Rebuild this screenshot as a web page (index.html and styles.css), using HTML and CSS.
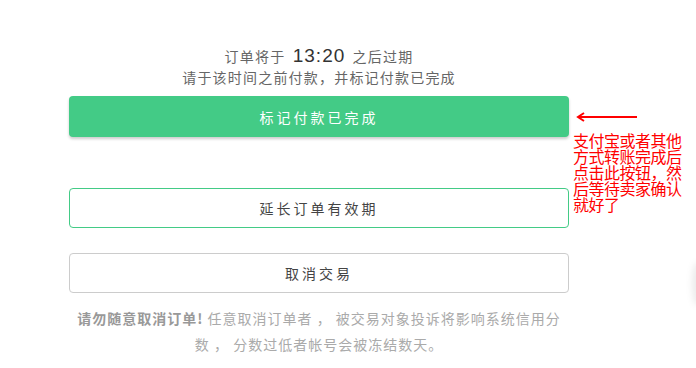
FILE: index.html
```html
<!DOCTYPE html>
<html lang="zh-CN">
<head>
  <meta charset="UTF-8">
  <title>订单付款</title>
  <link rel="stylesheet" href="styles.css">
</head>
<body>
  <div class="wrap">
    <div class="pay">
      <div class="notice">
        <p>订单将于 <span class="time">13:20</span> 之后过期</p>
        <p>请于该时间之前付款，并标记付款已完成</p>
      </div>

      <button class="btn btn-done">标记付款已完成</button>
      <button class="btn btn-extend">延长订单有效期</button>
      <button class="btn btn-cancel">取消交易</button>

      <p class="warn"><strong>请勿随意取消订单!</strong> 任意取消订单者 ， 被交易对象投诉将影响系统信用分数 ， 分数过低者帐号会被冻结数天。</p>
    </div>

    <div class="note">
      <svg class="arrow" width="64" height="10" viewBox="0 0 64 10">
        <line x1="4" y1="5" x2="62" y2="5" stroke="#f00" stroke-width="2"/>
        <polyline points="9,1 3,5 9,9" fill="none" stroke="#f00" stroke-width="2"/>
      </svg>
      <p>支付宝或者其他方式转账完成后点击此按钮，然后等待卖家确认就好了</p>
    </div>
  </div>
  <div class="edge"></div>
</body>
</html>
```

FILE: styles.css
```css
body { margin: 0; background: #fff; font-family: "Noto Sans CJK SC", "Liberation Sans", sans-serif; color: #555; }
.wrap { display: flex; align-items: flex-start; padding: 45px 0 0 69px; }
.pay { width: 500px; }
.notice { text-align: center; font-size: 14px; line-height: 21px; color: #666; letter-spacing: 1.2px; }
.notice p { margin: 0; }
.time { font-family: "Liberation Sans", sans-serif; font-size: 19px; color: #333; letter-spacing: 1px; margin: 0 3px; }
.btn { display: block; width: 500px; height: 40px; border-radius: 4px; font-family: inherit; font-size: 14px; letter-spacing: 3px; background: #fff; cursor: pointer; }
.btn-done { margin-top: 8px; height: 41px; border: none; background: #43cb86; color: #fff; box-shadow: 0 2px 3px rgba(0,0,0,0.2); }
.btn-extend { margin-top: 51px; border: 1px solid #43cb86; color: #444; }
.btn-cancel { margin-top: 25px; border: 1px solid #ccc; color: #444; }
.warn { margin: 12px 0 0; padding: 0 2px; text-align: center; font-size: 14px; line-height: 26px; color: #aaa; letter-spacing: 1px; }
.warn strong { color: #999; }
.note { width: 118px; margin: 67px 0 0 4px; color: #f00; }
.arrow { display: block; margin-left: 2px; }
.note p { margin: 10px 0 0; font-size: 16px; line-height: 16px; letter-spacing: -0.5px; }
.edge { position: absolute; right: -6px; top: 262px; width: 10px; height: 44px; border-radius: 50%; background: rgba(0,0,0,0.08); filter: blur(3px); }
```
